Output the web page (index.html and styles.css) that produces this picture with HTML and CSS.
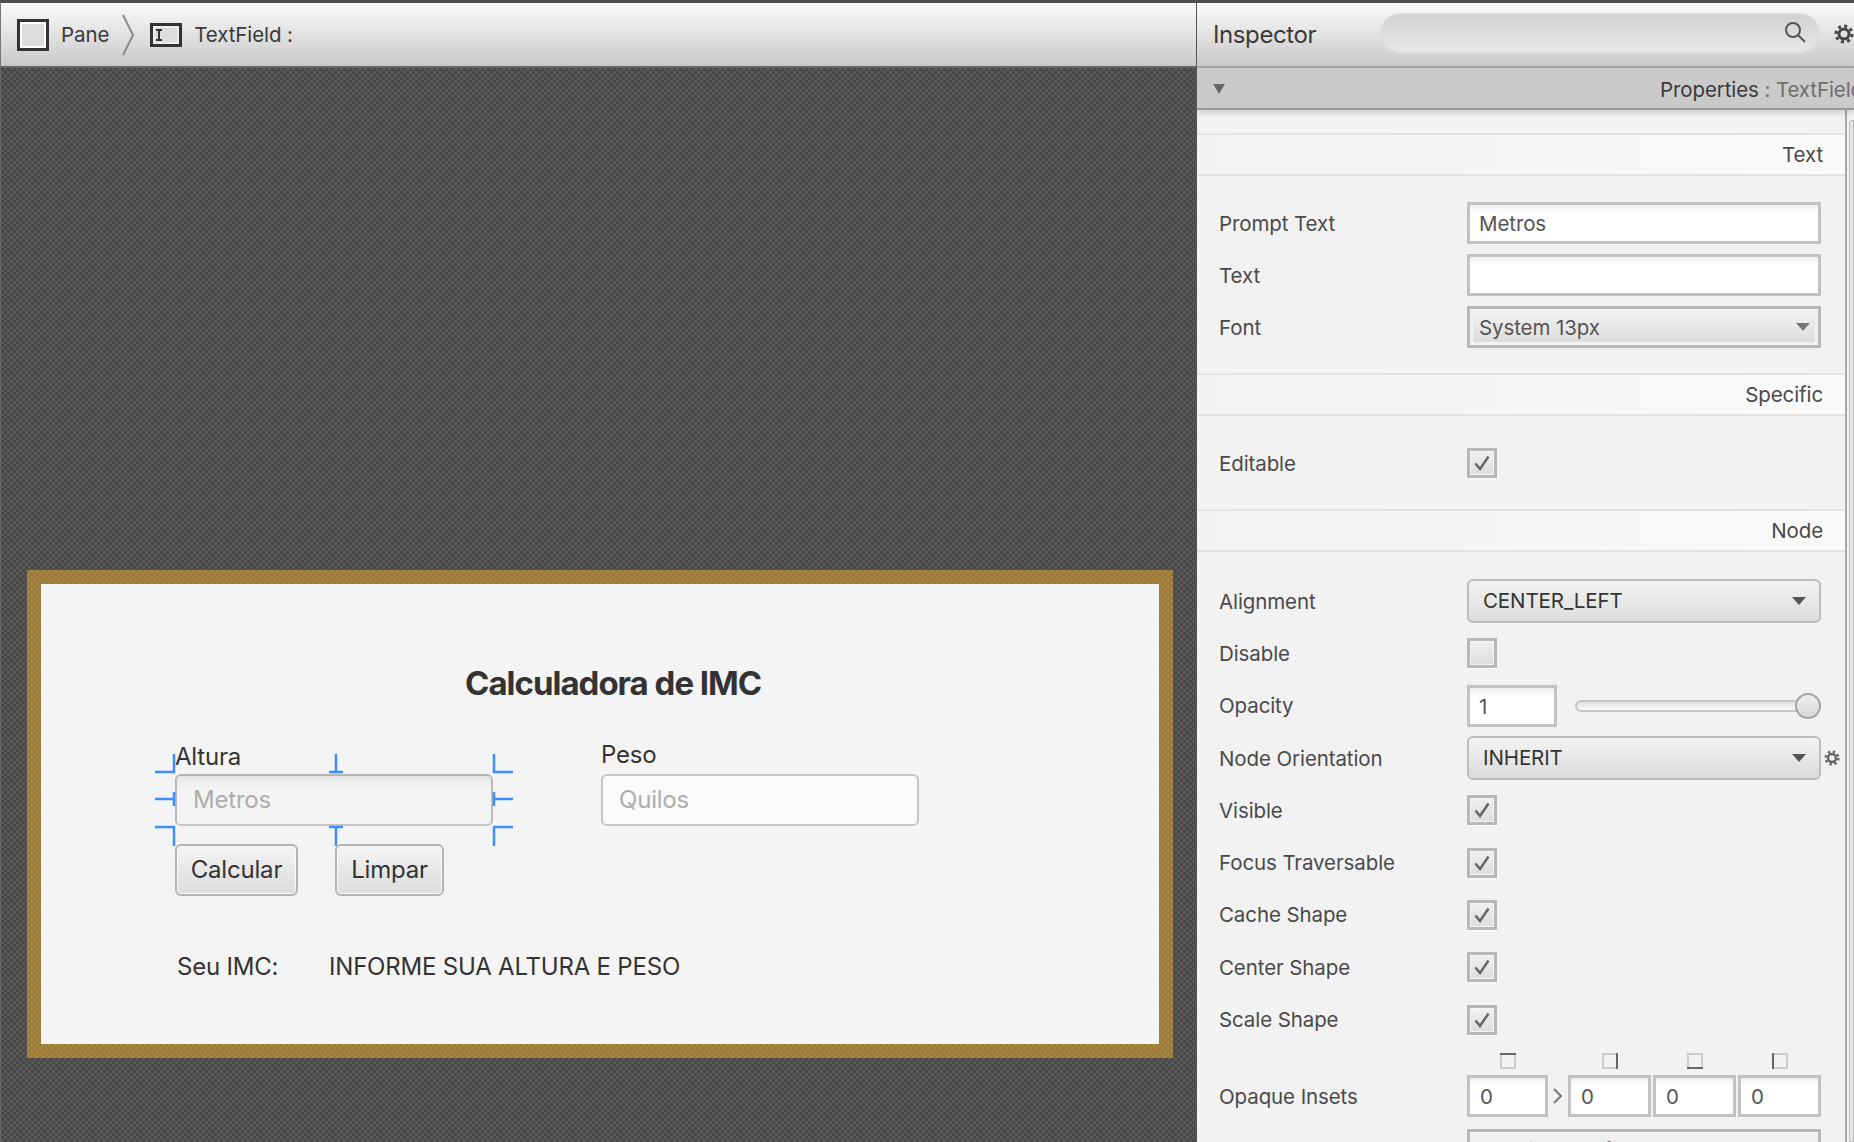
FILE: index.html
```html
<!DOCTYPE html>
<html lang="en">
<head>
    <meta charset="UTF-8" />
    <title>Scene Builder</title>
    <link rel="stylesheet" href="styles.css">
</head>
<body>
    <svg class="defs" width="0" height="0">
        <symbol id="gear" viewBox="0 0 20 20">
            <circle cx="10" cy="10" r="5" fill="none" stroke="currentColor" stroke-width="3" />
            <circle cx="10" cy="10" r="8" fill="none" stroke="currentColor" stroke-width="3" stroke-dasharray="3 3.28" />
        </symbol>
        <symbol id="check" viewBox="0 0 16 16">
            <path d="M1.5 8.5 L6 14 L14.5 1.5" fill="none" stroke="currentColor" stroke-width="2.5" />
        </symbol>
    </svg>

    <div class="app">
        <main class="left">
            <header class="crumbs">
                <span class="crumb-icon">
                    <svg width="32" height="32" viewBox="0 0 32 32"><rect x="1.5" y="1.5" width="29" height="29" fill="#dcdcdc" stroke="#333" stroke-width="3" /><rect x="4" y="4" width="24" height="24" fill="none" stroke="#fff" stroke-width="2" /></svg>
                </span>
                <span class="crumb-label">Pane</span>
                <svg class="crumb-sep" width="12" height="42" viewBox="0 0 12 42"><path d="M1 1 L11 21 L1 41" fill="none" stroke="#8a8a8a" stroke-width="2" /></svg>
                <span class="crumb-icon">
                    <svg width="32" height="24" viewBox="0 0 32 24"><rect x="1.5" y="1.5" width="29" height="21" fill="#dcdcdc" stroke="#333" stroke-width="3" /><rect x="4" y="4" width="24" height="16" fill="none" stroke="#fff" stroke-width="1" /><path d="M6 7 H12 M9 7 V17 M6 17 H12" fill="none" stroke="#333" stroke-width="2" /></svg>
                </span>
                <span class="crumb-label">TextField :</span>
            </header>

            <section class="canvas">
                <div class="frame">
                    <div class="pane">
                        <div class="node title">Calculadora de IMC</div>
                        <div class="node lbl lbl-altura">Altura</div>
                        <div class="node lbl lbl-peso">Peso</div>
                        <div class="node field field-selected">Metros</div>
                        <div class="node field field-peso">Quilos</div>
                        <div class="node btn btn-calcular">Calcular</div>
                        <div class="node btn btn-limpar">Limpar</div>
                        <div class="node lbl lbl-imc">Seu IMC:</div>
                        <div class="node lbl lbl-result">INFORME SUA ALTURA E PESO</div>
                        <svg class="handles" width="1118" height="460" viewBox="0 0 1118 460">
                            <path d="M114 188 H133 V170 M288 188 H302 M295 188 V170 M472 188 H453 V170" />
                            <path d="M114 215 H133 M133 208 V222 M472 215 H453 M453 208 V222" />
                            <path d="M114 243 H133 V262 M288 243 H302 M295 243 V262 M472 243 H453 V262" />
                        </svg>
                    </div>
                </div>
            </section>
        </main>

        <aside class="inspector">
            <header class="insp-head">
                <span class="insp-title">Inspector</span>
                <div class="search">
                    <svg width="22" height="22" viewBox="0 0 22 22"><circle cx="9" cy="9" r="7" fill="none" stroke="#555" stroke-width="2" /><path d="M14 14 L21 21" stroke="#555" stroke-width="2" /></svg>
                </div>
                <svg class="head-gear" width="20" height="20"><use href="#gear" /></svg>
            </header>

            <div class="props-bar">
                <span class="arrow"></span>
                <span class="props-title">Properties <em>: TextField</em></span>
            </div>

            <div class="scroll">
                <div class="sec-head">Text</div>
                <div class="rows">
                    <div class="row"><label>Prompt Text</label><div class="input">Metros</div></div>
                    <div class="row"><label>Text</label><div class="input"></div></div>
                    <div class="row"><label>Font</label><div class="combo combo-square">System 13px<span class="caret"></span></div></div>
                </div>

                <div class="sec-head">Specific</div>
                <div class="rows">
                    <div class="row"><label>Editable</label><span class="check"><svg width="16" height="16"><use href="#check" /></svg></span></div>
                </div>

                <div class="sec-head">Node</div>
                <div class="rows rows-node">
                    <div class="row"><label>Alignment</label><div class="combo">CENTER_LEFT<span class="caret"></span></div></div>
                    <div class="row"><label>Disable</label><span class="check"></span></div>
                    <div class="row">
                        <label>Opacity</label>
                        <div class="opacity">
                            <div class="input input-small">1</div>
                            <div class="slider"><span class="thumb"></span></div>
                        </div>
                    </div>
                    <div class="row">
                        <label>Node Orientation</label>
                        <div class="combo">INHERIT<span class="caret"></span></div>
                        <svg class="row-gear" width="16" height="16"><use href="#gear" /></svg>
                    </div>
                    <div class="row"><label>Visible</label><span class="check"><svg width="16" height="16"><use href="#check" /></svg></span></div>
                    <div class="row"><label>Focus Traversable</label><span class="check"><svg width="16" height="16"><use href="#check" /></svg></span></div>
                    <div class="row"><label>Cache Shape</label><span class="check"><svg width="16" height="16"><use href="#check" /></svg></span></div>
                    <div class="row"><label>Center Shape</label><span class="check"><svg width="16" height="16"><use href="#check" /></svg></span></div>
                    <div class="row"><label>Scale Shape</label><span class="check"><svg width="16" height="16"><use href="#check" /></svg></span></div>

                    <div class="inset-row">
                        <label>Opaque Insets</label>
                        <div class="insets">
                            <div class="inset inset-first">
                                <svg width="16" height="16"><rect x="1" y="1" width="14" height="14" fill="none" stroke="#ccc" stroke-width="2" /><path d="M0 1 H16" stroke="#666" stroke-width="2" /></svg>
                                <div class="input">0</div>
                            </div>
                            <svg class="inset-link" width="9" height="16" viewBox="0 0 9 16"><path d="M1 1 L8 8 L1 15" fill="none" stroke="#777" stroke-width="2" /></svg>
                            <div class="inset">
                                <svg width="16" height="16"><rect x="1" y="1" width="14" height="14" fill="none" stroke="#ccc" stroke-width="2" /><path d="M15 0 V16" stroke="#666" stroke-width="2" /></svg>
                                <div class="input">0</div>
                            </div>
                            <div class="inset">
                                <svg width="16" height="16"><rect x="1" y="1" width="14" height="14" fill="none" stroke="#ccc" stroke-width="2" /><path d="M0 15 H16" stroke="#666" stroke-width="2" /></svg>
                                <div class="input">0</div>
                            </div>
                            <div class="inset">
                                <svg width="16" height="16"><rect x="1" y="1" width="14" height="14" fill="none" stroke="#ccc" stroke-width="2" /><path d="M1 0 V16" stroke="#666" stroke-width="2" /></svg>
                                <div class="input">0</div>
                            </div>
                        </div>
                    </div>

                    <div class="row row-cut"><label>Cursor</label><div class="combo combo-square">Inherited (Default)<span class="caret"></span></div></div>
                </div>
            </div>
            <span class="scroll-thumb"></span>
        </aside>
    </div>
</body>
</html>
```

FILE: styles.css
```css
html, body {
    margin: 0;
    height: 100%;
    overflow: hidden;
}
body {
    font-family: Inter, "Liberation Sans", sans-serif;
    font-size: 20.5px;
    letter-spacing: -0.1px;
    color: #4a4a4a;
    background: #f2f2f2;
}
.defs {
    position: absolute;
}
.app {
    display: flex;
    height: 1142px;
}

/* left side */
.left {
    width: 1196px;
    display: flex;
    flex-direction: column;
    flex: none;
    border-right: 1px solid #555;
}
.crumbs {
    height: 68px;
    box-sizing: border-box;
    border-top: 3px solid #4e4e4e;
    border-bottom: 2px solid #666;
    border-left: 1px solid #777;
    background: linear-gradient(#fbfbfb, #c9c9c9);
    display: flex;
    align-items: center;
    padding-left: 16px;
}
.crumb-icon {
    display: flex;
}
.crumb-label {
    margin-left: 12px;
    color: #3a3a3a;
}
.crumb-sep {
    margin: 0 16px 0 13px;
}
.canvas {
    flex: 1;
    position: relative;
    overflow: hidden;
    background: repeating-conic-gradient(#585858 0 25%, #474747 0 50%) 0 0 / 6px 6px;
    border-left: 1px solid #666;
}
.frame {
    position: absolute;
    left: 26px;
    top: 502px;
    padding: 14px;
    background: repeating-conic-gradient(#a68541 0 25%, #997a3b 0 50%) 0 0 / 6px 6px;
}
.pane {
    position: relative;
    width: 1118px;
    height: 460px;
    background: #f4f4f4;
    color: #333;
    font-size: 24px;
    letter-spacing: -0.2px;
}
.node {
    position: absolute;
    white-space: nowrap;
}
.title {
    left: 424px;
    top: 80px;
    font-size: 33px;
    line-height: 38px;
    font-weight: 700;
    letter-spacing: -1px;
}
.lbl {
    line-height: 30px;
}
.lbl-altura { left: 134px; top: 158px; }
.lbl-peso { left: 560px; top: 156px; }
.lbl-imc { left: 136px; top: 368px; }
.lbl-result { left: 288px; top: 368px; }
.field {
    top: 190px;
    width: 318px;
    height: 52px;
    box-sizing: border-box;
    padding-left: 16px;
    line-height: 48px;
    color: #adadad;
    border: 2px solid #c4c4c4;
    border-radius: 6px;
    background: #fbfbfb;
}
.field-selected {
    left: 134px;
    border-color: #b4b4b4 #bbb #c4c4c4;
    background: linear-gradient(#e6e6e6, #f4f4f4 25%);
}
.field-peso {
    left: 560px;
}
.btn {
    top: 260px;
    height: 52px;
    box-sizing: border-box;
    line-height: 48px;
    text-align: center;
    color: #333;
    border: 2px solid #b4b4b4;
    border-radius: 6px;
    background: linear-gradient(#f4f4f4, #dcdcdc);
    box-shadow: inset 0 0 0 1px #fafafa;
}
.btn-calcular { left: 134px; width: 123px; }
.btn-limpar { left: 294px; width: 109px; }
.handles {
    position: absolute;
    left: 0;
    top: 0;
    pointer-events: none;
}
.handles path {
    fill: none;
    stroke: #3d8fff;
    stroke-width: 2.5;
}

/* inspector */
.inspector {
    flex: 1;
    position: relative;
    overflow: hidden;
    display: flex;
    flex-direction: column;
}
.insp-head {
    height: 68px;
    flex: none;
    box-sizing: border-box;
    border-top: 3px solid #4e4e4e;
    border-bottom: 2px solid #a8a8a8;
    background: linear-gradient(#fbfbfb, #c9c9c9);
    display: flex;
    align-items: center;
    padding-left: 16px;
}
.insp-title {
    width: 167px;
    font-size: 24px;
    letter-spacing: -0.4px;
    color: #3a3a3a;
    padding-bottom: 1px;
}
.search {
    width: 440px;
    height: 41px;
    box-sizing: border-box;
    border: 2px solid #dcdcdc;
    border-radius: 21px;
    background: linear-gradient(#d2d2d2, #e8e8e8);
    display: flex;
    align-items: center;
    justify-content: flex-end;
    padding: 0 12px 4px 0;
    margin-bottom: 2px;
}
.head-gear {
    margin: 0 0 2px 14px;
    color: #444;
    flex: none;
}
.props-bar {
    height: 42px;
    flex: none;
    box-sizing: border-box;
    border-bottom: 2px solid #999;
    background: #cacaca;
    box-shadow: 0 3px 6px rgba(0, 0, 0, 0.15);
    display: flex;
    align-items: center;
    padding-left: 16px;
    padding-top: 2px;
    position: relative;
    z-index: 1;
    white-space: nowrap;
}
.arrow {
    width: 0;
    height: 0;
    border-left: 6px solid transparent;
    border-right: 6px solid transparent;
    border-top: 10px solid #666;
}
.props-title {
    margin-left: 435px;
    color: #3a3a3a;
}
.props-title em {
    font-style: normal;
    color: #6e6e6e;
}
.scroll {
    flex: 1;
    min-height: 0;
    overflow: hidden;
    padding-top: 23px;
    width: 648px;
    border-right: 2px solid #a9a9a9;
}
.scroll-thumb {
    position: absolute;
    right: 0;
    top: 120px;
    bottom: 0;
    width: 3px;
    background: #e4e4e4;
    border: 1px solid #bbb;
    border-radius: 3px 0 0 0;
}
.sec-head {
    height: 39px;
    line-height: 40px;
    border-top: 2px solid #e2e2e2;
    border-bottom: 2px solid #e2e2e2;
    padding-right: 22px;
    text-align: right;
    background: linear-gradient(to right, #f2f2f2, #fafafa);
}
.rows {
    padding: 21px 0 20px 22px;
}
.row {
    height: 52px;
    display: flex;
    align-items: center;
    position: relative;
}
.rows-node {
    padding-top: 23px;
}
.rows-node .row {
    height: 52.3px;
}
label {
    width: 248px;
    flex: none;
}
.input {
    flex: 1;
    max-width: 354px;
    height: 42px;
    box-sizing: border-box;
    border: 3px solid #c2c2c2;
    padding-left: 9px;
    line-height: 37px;
    color: #555;
    background: linear-gradient(#eee, #fff 8px);
}
.combo {
    width: 354px;
    height: 44px;
    box-sizing: border-box;
    border: 2px solid #bdbdbd;
    border-radius: 6px;
    background: linear-gradient(#f3f3f3, #dcdcdc);
    padding-left: 14px;
    line-height: 40px;
    color: #333;
    position: relative;
}
.combo-square {
    height: 42px;
    border: 3px solid #b8b8b8;
    border-radius: 0;
    box-shadow: inset 0 0 0 3px #f3f3f3;
    padding-left: 9px;
    line-height: 37px;
    color: #555;
}
.caret {
    position: absolute;
    right: 13px;
    top: 50%;
    margin-top: -4px;
    width: 0;
    height: 0;
    border-left: 7px solid transparent;
    border-right: 7px solid transparent;
    border-top: 8px solid #555;
}
.combo-square .caret {
    right: 8px;
    border-top-color: #777;
}
.check {
    width: 30px;
    height: 30px;
    box-sizing: border-box;
    border: 3px solid #b8b8b8;
    background: linear-gradient(#f1f1f1, #dcdcdc);
    box-shadow: inset 0 0 0 1px #f4f4f4, 0 1px 0 #fff;
    display: flex;
    align-items: center;
    justify-content: center;
    color: #666;
}
.opacity {
    width: 354px;
    display: flex;
    align-items: center;
}
.input-small {
    flex: none;
    width: 90px;
}
.slider {
    position: relative;
    margin-left: 18px;
    flex: 1;
    height: 12px;
    box-sizing: border-box;
    border: 2px solid #c6c6c6;
    border-radius: 6px;
    background: linear-gradient(#e0e0e0, #fafafa);
}
.thumb {
    position: absolute;
    right: -2px;
    top: -9px;
    width: 26px;
    height: 26px;
    box-sizing: border-box;
    border: 2px solid #a4a4a4;
    border-radius: 50%;
    background: linear-gradient(#f0f0f0, #d8d8d8);
}
.row-gear {
    position: absolute;
    left: 605px;
    color: #666;
}
.inset-row {
    display: flex;
    align-items: flex-end;
    margin-top: 7px;
    height: 64px;
}
.inset-row label {
    padding-bottom: 8px;
}
.insets {
    width: 354px;
    display: flex;
    align-items: flex-end;
    gap: 2px;
}
.inset {
    flex: 1;
    display: flex;
    flex-direction: column;
    align-items: center;
    gap: 6px;
}
.inset .input {
    width: 100%;
    flex: none;
    height: 42px;
    padding-left: 10px;
}
.inset-first {
    flex: none;
    width: 81px;
}
.inset-link {
    margin: 0 4px 13px 3px;
    flex: none;
}
.row-cut {
    margin-top: 7px;
}
```
